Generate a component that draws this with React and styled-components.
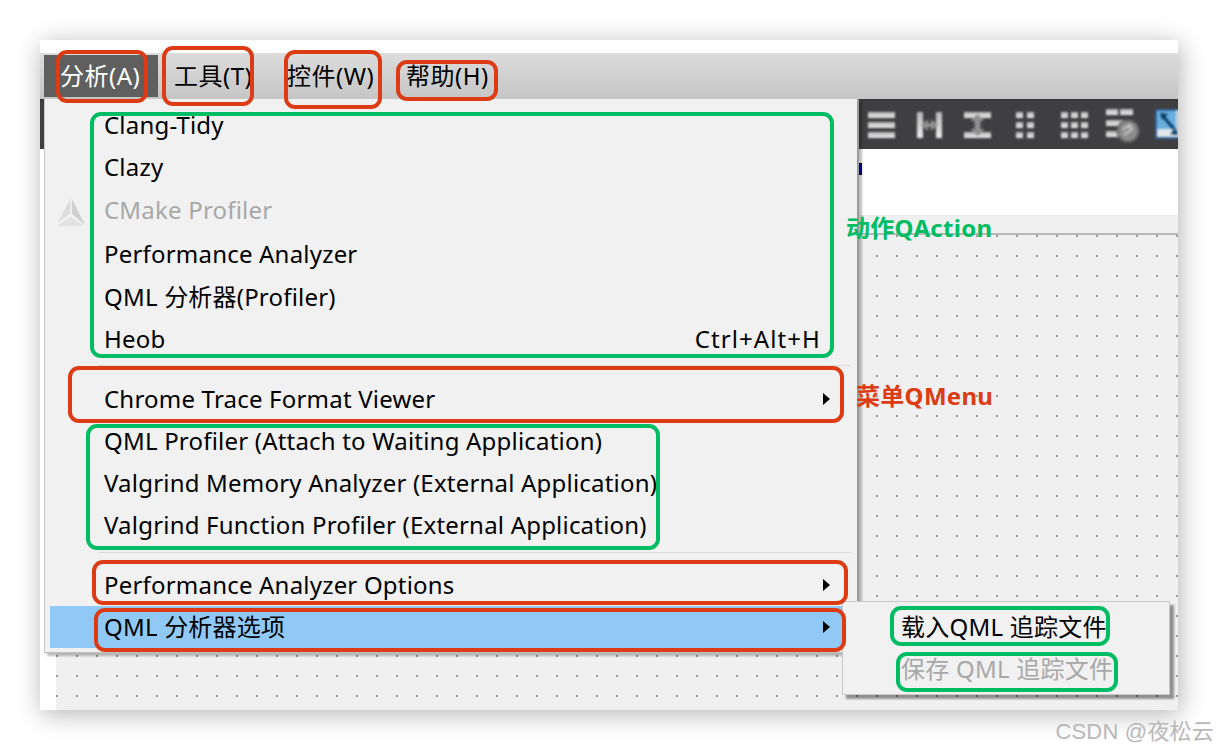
import React from "react";
import styled, { createGlobalStyle } from "styled-components";

const GlobalStyle = createGlobalStyle`
  html, body {
    margin: 0;
    padding: 0;
    background: #fff;
  }
  body {
    font-family: "Noto Sans", "Noto Sans CJK SC", sans-serif;
  }
`;

const Page = styled.div`
  position: relative;
  width: 1218px;
  height: 750px;
  padding: 40px;
  box-sizing: border-box;
  overflow: hidden;
`;

const Window = styled.div`
  position: relative;
  width: 1138px;
  height: 670px;
  background: #fff;
  box-shadow: 2px 4px 24px rgba(0, 0, 0, 0.3);
  display: flex;
  flex-direction: column;
`;

const TopStrip = styled.div`
  height: 13px;
  flex: none;
`;

const MenuBar = styled.div`
  height: 46px;
  flex: none;
  padding-left: 4px;
  box-sizing: border-box;
  display: flex;
  background: linear-gradient(#dcdcdc, #c5c5c5);
`;

const BarItem = styled.div`
  width: ${(p) => p.$w}px;
  height: 42px;
  margin-top: 2px;
  padding-left: ${(p) => p.$pad}px;
  box-sizing: border-box;
  font-size: 24px;
  line-height: 42px;
  letter-spacing: 0.5px;
  white-space: nowrap;
  color: ${(p) => (p.$active ? "#fff" : "#000")};
  background: ${(p) => (p.$active ? "#5f5f5f" : "transparent")};
`;

const Workspace = styled.div`
  flex: 1;
  display: flex;
  flex-direction: column;
  min-height: 0;
  overflow: hidden;
`;

const Toolbar = styled.div`
  height: 50px;
  flex: none;
  padding-left: 828px;
  box-sizing: border-box;
  display: flex;
  align-items: center;
  background: #3f3f41;
  border-top: 2px solid #37373a;
  overflow: hidden;
`;

const ToolSlot = styled.svg`
  flex: none;
  width: 48px;
  height: 36px;
  overflow: visible;
  filter: blur(0.8px);
`;

const FormArea = styled.div`
  position: relative;
  height: 66px;
  flex: none;
  background: #fff;
`;

const Handle = styled.div`
  position: absolute;
  left: 818px;
  top: 14px;
  width: 4px;
  height: 12px;
  background: #0000c8;
  border: 1px solid #000;
  box-sizing: border-box;
`;

const DesignArea = styled.div`
  flex: 1;
  margin-left: 16px;
  display: flex;
  flex-direction: column;
  min-height: 0;
`;

const Band = styled.div`
  height: 20px;
  flex: none;
  box-sizing: border-box;
  background: #f0f0f0;
  border-top: 1px solid #eaeaea;
  border-bottom: 2px solid #b8b8b8;
`;

const Canvas = styled.div`
  flex: 1;
  background-color: #f0f0f0;
  background-image: radial-gradient(circle at 1px 1px, #9a9a9a 1px, transparent 1.3px);
  background-size: 20px 20px;
`;

const Menu = styled.div`
  position: absolute;
  left: 4px;
  top: 59px;
  width: 815px;
  height: 554px;
  padding: 5px 6px 0 5px;
  box-sizing: border-box;
  background: #f1f1f1;
  border-left: 1px solid #c8c8c8;
  border-bottom: 1px solid #c0c0c0;
  border-right: 2px solid #9c9c9c;
  box-shadow: 3px 3px 2px rgba(0, 0, 0, 0.25);
`;

const Row = styled.div`
  height: ${(p) => (p.$tall ? 44 : 42)}px;
  padding: ${(p) => (p.$tall ? "1px" : "0")} 22px 1px 54px;
  box-sizing: border-box;
  display: flex;
  align-items: center;
  justify-content: space-between;
  font-size: 24px;
  line-height: 30px;
  letter-spacing: 0.2px;
  white-space: nowrap;
  color: ${(p) => (p.$disabled ? "#a8a8a8" : "#000")};
  background: ${(p) => (p.$hot ? "#90c8f6" : "transparent")};
`;

const Shortcut = styled.span`
  letter-spacing: 1.1px;
  margin-right: 8px;
`;

const Separator = styled.div`
  height: 1px;
  margin: ${(p) => p.$top}px 0 ${(p) => 17 - p.$top}px 48px;
  background: #dcdcdc;
`;

const Arrow = styled.span`
  width: 0;
  height: 0;
  border-left: 7px solid #000;
  border-top: 6px solid transparent;
  border-bottom: 6px solid transparent;
  margin: 0 -1px 0 0;
`;

const Logo = styled.svg`
  position: absolute;
  left: 11px;
  top: 99px;
  width: 30px;
  height: 30px;
`;

const SubMenu = styled.div`
  position: absolute;
  left: 802px;
  top: 561px;
  width: 328px;
  height: 94px;
  padding-top: 4px;
  box-sizing: border-box;
  background: #f1f1f1;
  border: 1px solid #c8c8c8;
  box-shadow: 4px 4px 2px rgba(0, 0, 0, 0.4);
`;

const SubRow = styled.div`
  height: 42px;
  padding: 0 0 1px 58px;
  box-sizing: border-box;
  display: flex;
  align-items: center;
  font-size: 24px;
  line-height: 30px;
  letter-spacing: 0.25px;
  white-space: nowrap;
  color: ${(p) => (p.$disabled ? "#a8a8a8" : "#000")};
`;

const Frame = styled.div`
  position: absolute;
  left: ${(p) => p.$x}px;
  top: ${(p) => p.$y}px;
  width: ${(p) => p.$w}px;
  height: ${(p) => p.$h}px;
  box-sizing: border-box;
  border: 4px solid ${(p) => (p.$green ? "#00bd63" : "#dc3b13")};
  border-radius: 11px;
  pointer-events: none;
`;

const Note = styled.div`
  position: absolute;
  left: ${(p) => p.$x}px;
  top: ${(p) => p.$y}px;
  font-size: 24px;
  font-weight: 700;
  line-height: 32px;
  letter-spacing: 0.3px;
  white-space: nowrap;
  color: ${(p) => p.$color};
`;

const Watermark = styled.div`
  position: absolute;
  right: 4px;
  bottom: 3px;
  font-family: "Liberation Sans", "Noto Sans CJK SC", sans-serif;
  font-size: 22px;
  line-height: 30px;
  letter-spacing: 0.2px;
  white-space: nowrap;
  color: #b8b8b8;
`;

const bar = (x, y, w, h) => <rect x={x} y={y} width={w} height={h} fill="url(#steel)" />;

const grid = (cols, cellW, pitch, x0) =>
  [5, 15, 25].flatMap((y) =>
    Array.from({ length: cols }, (_, i) => (
      <React.Fragment key={`${y}-${i}`}>{bar(x0 + i * pitch, y, cellW, 6)}</React.Fragment>
    ))
  );

const ToolIcons = () => (
  <>
    <ToolSlot viewBox="0 0 48 36">
      <defs>
        <linearGradient id="steel" x1="0" y1="0" x2="0" y2="1">
          <stop offset="0" stopColor="#b5b5b5" />
          <stop offset="1" stopColor="#ececec" />
        </linearGradient>
      </defs>
      {bar(0, 5, 27, 6)}
      {bar(0, 15, 27, 6)}
      {bar(0, 25, 27, 6)}
    </ToolSlot>
    <ToolSlot viewBox="0 0 48 36">
      {bar(1, 5, 6, 26)}
      {bar(20, 5, 6, 26)}
      <path d="M5 18l7-6v4h3v-4l7 6-7 6v-4h-3v4z" fill="#8f8f8f" />
    </ToolSlot>
    <ToolSlot viewBox="0 0 48 36">
      {bar(0, 5, 27, 6)}
      {bar(0, 25, 27, 6)}
      <path d="M13.5 7l7 7h-4v8h4l-7 7-7-7h4v-8h-4z" fill="#8f8f8f" />
    </ToolSlot>
    <ToolSlot viewBox="0 0 48 36">{grid(2, 7, 11, 4)}</ToolSlot>
    <ToolSlot viewBox="0 0 48 36">{grid(3, 7, 10, 1)}</ToolSlot>
    <ToolSlot viewBox="0 0 48 36">
      {bar(-2, 2, 12, 6)}
      {bar(12, 2, 13, 6)}
      {bar(-2, 13, 26, 6)}
      {bar(-2, 24, 12, 6)}
      <circle cx="20" cy="24" r="10.5" fill="#8d8d8d" stroke="#6a6a6a" strokeWidth="2" />
      <path d="M15 23c2-4 8-4 9-1-1 3-6 3-8 6M20 18l3 0" fill="none" stroke="#c9c9c9" strokeWidth="2" />
    </ToolSlot>
    <ToolSlot viewBox="0 0 48 36">
      <rect x="0" y="3" width="30" height="28" fill="#6aaede" stroke="#2a5f9e" strokeWidth="1.5" />
      <rect x="1" y="22" width="28" height="8" fill="#e2e6ea" />
      <rect x="20" y="3" width="2" height="19" fill="#dfe5ea" />
      <path d="M6 8l12 14" stroke="#0a3d66" strokeWidth="3" />
      <path d="M4 6l8 1-6 6zM22 28l-8-1 6-6z" fill="#0a3d66" />
    </ToolSlot>
  </>
);

const barItems = [
  { label: "分析(A)", w: 114, pad: 16, active: true },
  { label: "工具(T)", w: 113, pad: 16 },
  { label: "控件(W)", w: 119, pad: 16 },
  { label: "帮助(H)", w: 100, pad: 16 },
];

const frames = [
  { x: 56, y: 50, w: 92, h: 53 },
  { x: 162, y: 46, w: 92, h: 60 },
  { x: 284, y: 50, w: 98, h: 59 },
  { x: 396, y: 60, w: 102, h: 41 },
  { x: 90, y: 112, w: 744, h: 246, green: true },
  { x: 68, y: 366, w: 776, h: 57 },
  { x: 86, y: 424, w: 574, h: 126, green: true },
  { x: 92, y: 560, w: 756, h: 45 },
  { x: 94, y: 608, w: 752, h: 44 },
  { x: 890, y: 606, w: 220, h: 40, green: true },
  { x: 896, y: 652, w: 222, h: 40, green: true },
];

export default function App() {
  return (
    <Page>
      <GlobalStyle />
      <Window>
        <TopStrip />
        <MenuBar>
          {barItems.map((it) => (
            <BarItem key={it.label} $w={it.w} $pad={it.pad} $active={it.active}>
              {it.label}
            </BarItem>
          ))}
        </MenuBar>
        <Workspace>
          <Toolbar>
            <ToolIcons />
          </Toolbar>
          <FormArea>
            <Handle />
          </FormArea>
          <DesignArea>
            <Band />
            <Canvas />
          </DesignArea>
        </Workspace>
        <Menu>
          <Logo viewBox="0 0 30 30">
            <path d="M15 0L2 24l12-8z" fill="#dcdcdc" />
            <path d="M16 1l13 26-13-11z" fill="#d0d0d0" />
            <path d="M1 28l14-9 13 9z" fill="#e2e2e2" />
          </Logo>
          <Row>Clang-Tidy</Row>
          <Row>Clazy</Row>
          <Row $tall $disabled>CMake Profiler</Row>
          <Row $tall>Performance Analyzer</Row>
          <Row>QML 分析器(Profiler)</Row>
          <Row>
            Heob<Shortcut>Ctrl+Alt+H</Shortcut>
          </Row>
          <Separator $top={5} />
          <Row>
            Chrome Trace Format Viewer<Arrow />
          </Row>
          <Row>QML Profiler (Attach to Waiting Application)</Row>
          <Row>Valgrind Memory Analyzer (External Application)</Row>
          <Row>Valgrind Function Profiler (External Application)</Row>
          <Separator $top={6} />
          <Row>
            Performance Analyzer Options<Arrow />
          </Row>
          <Row $hot>
            QML 分析器选项<Arrow />
          </Row>
        </Menu>
        <SubMenu>
          <SubRow>载入QML 追踪文件</SubRow>
          <SubRow $disabled>保存 QML 追踪文件</SubRow>
        </SubMenu>
      </Window>
      {frames.map((f) => (
        <Frame key={`${f.x}-${f.y}`} $x={f.x} $y={f.y} $w={f.w} $h={f.h} $green={f.green} />
      ))}
      <Note $x={846} $y={212} $color="#00bd63">动作QAction</Note>
      <Note $x={856} $y={380} $color="#dc3b13">菜单QMenu</Note>
      <Watermark>CSDN @夜松云</Watermark>
    </Page>
  );
}
